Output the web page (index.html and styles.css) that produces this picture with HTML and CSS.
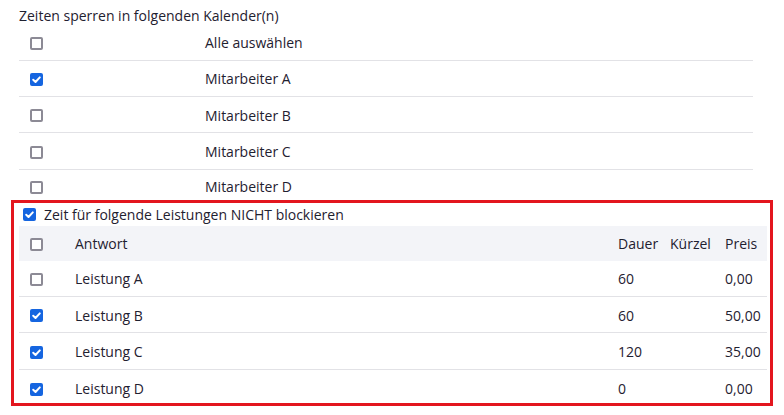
FILE: index.html
```html
<!DOCTYPE html>
<html lang="de">
<head>
<meta charset="utf-8">
<title>Zeiten sperren</title>
<link rel="stylesheet" href="styles.css">
</head>
<body>
<div class="title">Zeiten sperren in folgenden Kalender(n)</div>
<div class="list">
  <div class="row"><span class="cb"></span><span class="name">Alle auswählen</span></div>
  <div class="row"><span class="cb checked"><svg viewBox="0 0 13 13"><path d="M3.2 6.8 L5.5 9 L9.8 4.4" /></svg></span><span class="name">Mitarbeiter A</span></div>
  <div class="row"><span class="cb"></span><span class="name">Mitarbeiter B</span></div>
  <div class="row"><span class="cb"></span><span class="name">Mitarbeiter C</span></div>
  <div class="row last"><span class="cb"></span><span class="name">Mitarbeiter D</span></div>
</div>
<section class="box">
  <div class="toggle"><span class="cb checked"><svg viewBox="0 0 13 13"><path d="M3.2 6.8 L5.5 9 L9.8 4.4" /></svg></span><span>Zeit für folgende Leistungen NICHT blockieren</span></div>
  <div class="table">
    <div class="trow head"><span class="c0"><span class="cb"></span></span><span>Antwort</span><span>Dauer</span><span>Kürzel</span><span>Preis</span></div>
    <div class="trow"><span class="c0"><span class="cb"></span></span><span>Leistung A</span><span>60</span><span></span><span>0,00</span></div>
    <div class="trow"><span class="c0"><span class="cb checked"><svg viewBox="0 0 13 13"><path d="M3.2 6.8 L5.5 9 L9.8 4.4" /></svg></span></span><span>Leistung B</span><span>60</span><span></span><span>50,00</span></div>
    <div class="trow"><span class="c0"><span class="cb checked"><svg viewBox="0 0 13 13"><path d="M3.2 6.8 L5.5 9 L9.8 4.4" /></svg></span></span><span>Leistung C</span><span>120</span><span></span><span>35,00</span></div>
    <div class="trow last"><span class="c0"><span class="cb checked"><svg viewBox="0 0 13 13"><path d="M3.2 6.8 L5.5 9 L9.8 4.4" /></svg></span></span><span>Leistung D</span><span>0</span><span></span><span>0,00</span></div>
  </div>
</section>
</body>
</html>
```

FILE: styles.css
```css
* { box-sizing: border-box; }
html, body { margin: 0; padding: 0; background: #ffffff; }
body {
  font-family: "Open Sans", "Liberation Sans", sans-serif;
  font-size: 14px;
  color: #1f2130;
  width: 784px;
  height: 415px;
  overflow: hidden;
}
.title {
  padding: 6.5px 0 0 19px;
  line-height: 18px;
  height: 24.5px;
}
.list {
  margin-left: 19px;
  width: 734px;
}
.row {
  display: grid;
  grid-template-columns: 186px 1fr;
  align-items: center;
  height: 36.3px;
  padding-top: 2px;
  border-bottom: 1px solid #e2e2e6;
  line-height: 20px;
}
.row.last { border-bottom: none; height: 33px; }
.row .cb { margin-left: 11px; }
.cb {
  display: inline-block;
  width: 13px;
  height: 13px;
  border: 2px solid #8c8a95;
  border-radius: 2px;
  background: #fff;
  position: relative;
}
.cb.checked {
  border-color: #1565e0;
  background: #1565e0;
}
.cb svg {
  position: absolute;
  left: -2px;
  top: -2px;
  width: 13px;
  height: 13px;
}
.cb svg path {
  fill: none;
  stroke: #fff;
  stroke-width: 2;
  stroke-linecap: round;
  stroke-linejoin: round;
}
.box {
  margin-left: 14px;
  width: 756px;
  height: 200px;
  outline: 3px solid #e3161e;
  padding: 0 3px 0 5px;
}
.toggle {
  display: flex;
  align-items: center;
  gap: 8px;
  height: 23px;
  padding: 1px 0 0 4px;
  line-height: 20px;
}
.table { width: 748px; }
.trow {
  display: grid;
  grid-template-columns: 56px 543px 52px 55px 42px;
  align-items: center;
  height: 36.4px;
  padding-top: 2px;
  border-bottom: 1px solid #e2e2e6;
  line-height: 20px;
}
.trow.head {
  height: 35px;
  background: #f3f4f8;
  border-bottom: none;
}
.trow.last { border-bottom: none; }
.c0 { display: flex; align-items: center; padding-left: 11px; }
```
